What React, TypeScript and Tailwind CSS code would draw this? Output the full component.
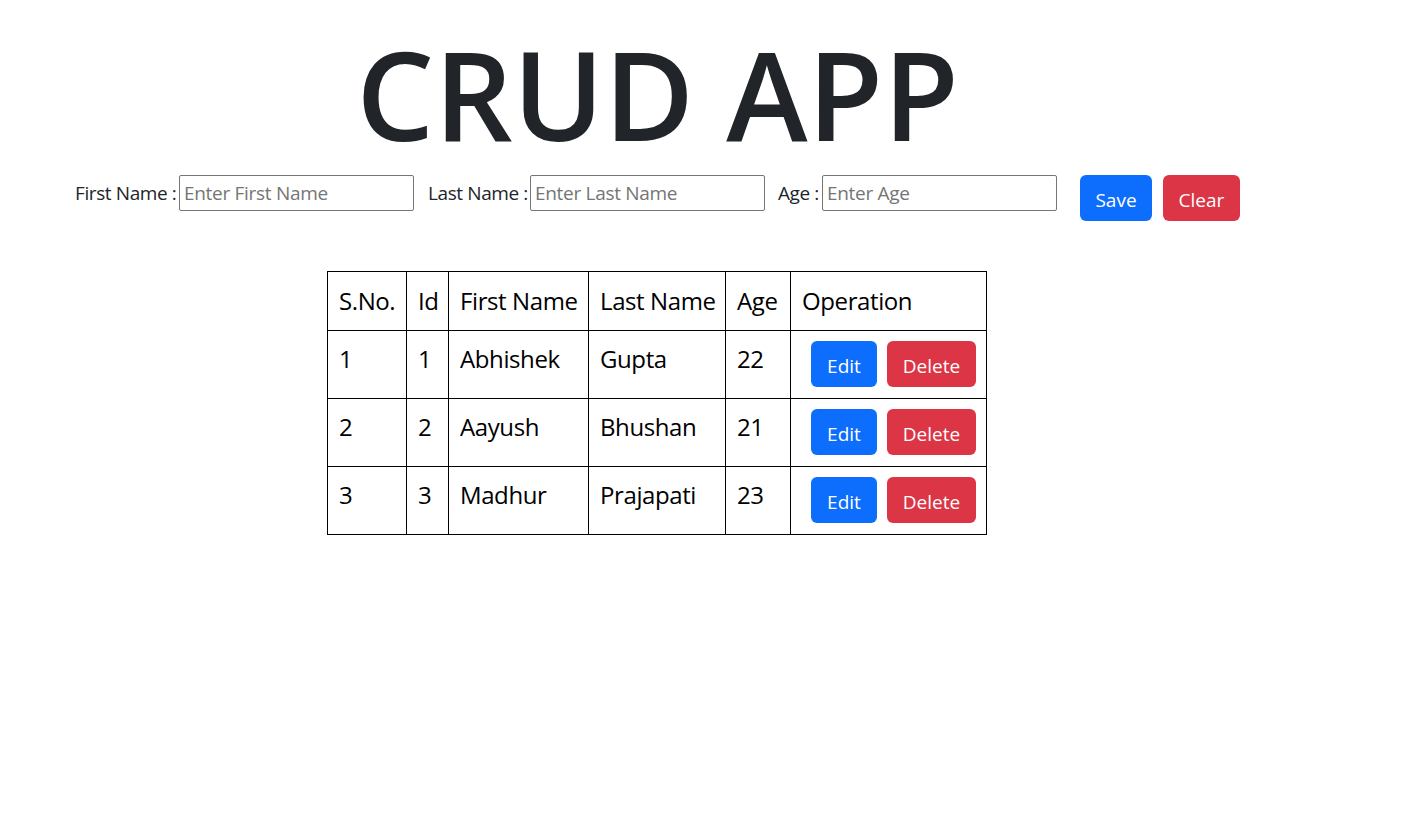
import { useState } from 'react'

interface Person {
  id: number
  firstName: string
  lastName: string
  age: number
}

const people: Person[] = [
  { id: 1, firstName: 'Abhishek', lastName: 'Gupta', age: 22 },
  { id: 2, firstName: 'Aayush', lastName: 'Bhushan', age: 21 },
  { id: 3, firstName: 'Madhur', lastName: 'Prajapati', age: 23 },
]

const Field = ({ label, placeholder, labelClass, value, onChange }: {
  label: string
  placeholder: string
  labelClass: string
  value: string
  onChange: (v: string) => void
}) => (
  <>
    <label className={`h-[36px] whitespace-nowrap text-[19px] leading-[36px] tracking-[-0.4px] ${labelClass}`}>{label}</label>
    <input
      type="text"
      value={value}
      onChange={(e) => onChange(e.target.value)}
      placeholder={placeholder}
      className="h-[36px] w-[235px] rounded-[2px] border border-[#767676] px-[4px] text-[19px] tracking-[-0.3px] text-[#212529] outline-none placeholder:text-[#757575]"
    />
  </>
)

export default function App() {
  const [firstName, setFirstName] = useState('')
  const [lastName, setLastName] = useState('')
  const [age, setAge] = useState('')

  const clear = () => {
    setFirstName('')
    setLastName('')
    setAge('')
  }

  return (
    <div className="min-h-screen bg-white font-['Open_Sans','Noto_Sans',sans-serif] text-[#212529]">
      <h1 className="w-[1315px] pt-[20px] text-center text-[123px] font-semibold leading-[148px] text-[#212529]">
        CRUD APP
      </h1>

      <div className="mt-[7px] flex items-start pl-[75px]">
        <Field label="First Name :" placeholder="Enter First Name" labelClass="w-[104px]" value={firstName} onChange={setFirstName} />
        <div className="w-[14px]" />
        <Field label="Last Name :" placeholder="Enter Last Name" labelClass="w-[102px]" value={lastName} onChange={setLastName} />
        <div className="w-[13px]" />
        <Field label="Age :" placeholder="Enter Age" labelClass="w-[44px]" value={age} onChange={setAge} />
        <button className="ml-[23px] flex h-[46px] w-[72px] items-center justify-center rounded-[6px] bg-[#0d6efd] pt-[4px] text-[19px] text-white">
          Save
        </button>
        <button
          onClick={clear}
          className="ml-[11px] flex h-[46px] w-[77px] items-center justify-center rounded-[6px] bg-[#dc3545] pt-[4px] text-[19px] text-white"
        >
          Clear
        </button>
      </div>

      <div className="mt-[50px] pl-[327px]">
        <table className="w-[659px] table-fixed border-collapse text-[24px] leading-[36px] tracking-[-0.4px] text-black">
          <colgroup>
            <col className="w-[79px]" />
            <col className="w-[42px]" />
            <col className="w-[140px]" />
            <col className="w-[137px]" />
            <col className="w-[65px]" />
            <col className="w-[196px]" />
          </colgroup>
          <thead>
            <tr>
              {['S.No.', 'Id', 'First Name', 'Last Name', 'Age', 'Operation'].map(h => (
                <th key={h} className="whitespace-nowrap border border-black px-[11px] py-[11px] text-left font-normal">
                  {h}
                </th>
              ))}
            </tr>
          </thead>
          <tbody>
            {people.map((p, i) => (
              <tr key={p.id}>
                <td className="border border-black px-[11px] pb-[11px] pt-[10px] align-top">{i + 1}</td>
                <td className="border border-black px-[11px] pb-[11px] pt-[10px] align-top">{p.id}</td>
                <td className="whitespace-nowrap border border-black px-[11px] pb-[11px] pt-[10px] align-top">{p.firstName}</td>
                <td className="whitespace-nowrap border border-black px-[11px] pb-[11px] pt-[10px] align-top">{p.lastName}</td>
                <td className="border border-black px-[11px] pb-[11px] pt-[10px] align-top">{p.age}</td>
                <td className="border border-black pb-[11px] pl-[20px] pr-[10px] pt-[10px] align-top">
                  <div className="flex gap-[10px] tracking-normal">
                    <button className="flex h-[46px] w-[66px] items-center justify-center rounded-[6px] bg-[#0d6efd] pt-[4px] text-[19px] text-white">
                      Edit
                    </button>
                    <button className="flex h-[46px] w-[89px] items-center justify-center rounded-[6px] bg-[#dc3545] pt-[4px] text-[19px] text-white">
                      Delete
                    </button>
                  </div>
                </td>
              </tr>
            ))}
          </tbody>
        </table>
      </div>
    </div>
  )
}
